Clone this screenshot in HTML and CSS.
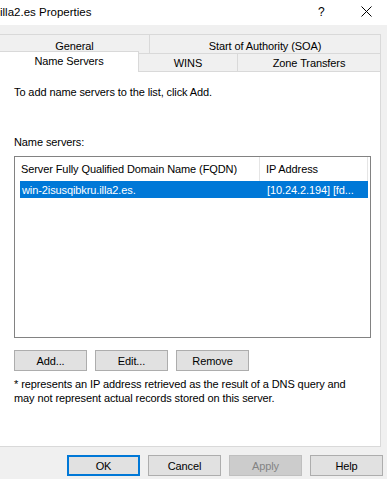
FILE: index.html
```html
<!DOCTYPE html>
<html lang="en">
<head>
    <meta charset="UTF-8">
    <title>illa2.es Properties</title>
    <link rel="stylesheet" href="styles.css">
</head>

<body>
    <!--1. title bar-->
    <header class="titlebar">
        <span class="title">illa2.es Properties</span>
        <span class="help">?</span>
        <span class="close">
            <svg width="11" height="11" viewBox="0 0 11 11">
                <path d="M0.5 0.5 L10.5 10.5 M10.5 0.5 L0.5 10.5" stroke="#000" stroke-width="1" fill="none"/>
            </svg>
        </span>
    </header>

    <!--2. tabs-->
    <nav class="tabs">
        <div class="tabrow">
            <div class="tab first t-general">General</div>
            <div class="tab t-soa">Start of Authority (SOA)</div>
        </div>
        <div class="tabrow">
            <div class="tab first active t-ns">Name Servers</div>
            <div class="tab t-wins">WINS</div>
            <div class="tab t-zone">Zone Transfers</div>
        </div>
    </nav>

    <!--3. panel-->
    <section class="panel">
        <p class="intro">To add name servers to the list, click Add.</p>
        <p class="label">Name servers:</p>

        <div class="listbox">
            <div class="lhead">
                <div class="col c-fqdn">Server Fully Qualified Domain Name (FQDN)</div>
                <div class="col c-ip">IP Address</div>
            </div>
            <div class="lrow selected">
                <div class="cell c-fqdn">win-2isusqibkru.illa2.es.</div>
                <div class="cell c-ip">[10.24.2.194] [fd...</div>
            </div>
        </div>

        <div class="btns">
            <button class="btn">Add...</button>
            <button class="btn">Edit...</button>
            <button class="btn">Remove</button>
        </div>

        <p class="note">* represents an IP address retrieved as the result of a DNS query and may not represent actual records stored on this server.</p>
    </section>

    <!--4. dialog buttons-->
    <footer class="footer">
        <button class="btn default">OK</button>
        <button class="btn">Cancel</button>
        <button class="btn" disabled>Apply</button>
        <button class="btn">Help</button>
    </footer>
</body>
</html>
```

FILE: styles.css
```css
html,
body,
p {
    margin: 0;
    padding: 0;
}

body {
    width: 387px;
    height: 479px;
    overflow: hidden;
    background-color: #f0f0f0;
    font-family: "Liberation Sans", Arial, sans-serif;
    font-size: 11px;
    letter-spacing: -0.1px;
    color: #000;
}

/*1. title bar*/
.titlebar {
    display: flex;
    align-items: center;
    height: 25px;
    background-color: #fff;
}

.title {
    flex: 1;
    font-size: 11.5px;
    letter-spacing: 0;
    padding-bottom: 2px;
}

.help {
    width: 12px;
    margin-right: 31px;
    font-size: 12px;
    padding-bottom: 2px;
}

.close {
    display: flex;
    width: 11px;
    margin-right: 15px;
    padding-bottom: 3px;
}

/*2. tabs*/
.tabs {
    padding-top: 9px;
}

.tabrow {
    display: flex;
    align-items: flex-end;
}

.tabrow:first-child {
    height: 19px;
}

.tabrow:last-child {
    height: 18px;
}

.tab {
    box-sizing: border-box;
    height: 100%;
    display: flex;
    align-items: center;
    justify-content: center;
    border: 1px solid #d9d9d9;
    border-bottom: none;
    border-left: none;
    padding-top: 1px;
}

.tabrow:first-child .tab {
    padding-top: 3px;
}

.t-general { width: 150px; }
.t-soa { width: 231px; }
.t-ns { width: 139px; }
.t-wins { width: 99px; }
.t-zone { width: 143px; }

.tab.active {
    position: relative;
    z-index: 1;
    height: 21px;
    margin-top: -2px;
    margin-bottom: -1px;
    background-color: #fff;
    padding-top: 0;
    padding-bottom: 2px;
    border-right: 1px solid #d9d9d9;
}

/*3. panel*/
.panel {
    box-sizing: border-box;
    width: 382px;
    height: 376px;
    margin-left: -1px;
    padding: 0 0 0 14px;
    background-color: #fff;
    border: 1px solid #d9d9d9;
}

.intro {
    margin-top: 13px;
    line-height: 15px;
}

.label {
    margin-top: 35px;
    line-height: 15px;
}

.listbox {
    box-sizing: border-box;
    width: 357px;
    height: 182px;
    margin-top: 6px;
    border: 1px solid #828282;
}

.lhead {
    display: flex;
    height: 24px;
}

.col {
    box-sizing: border-box;
    display: flex;
    align-items: center;
    padding-left: 6px;
    border-right: 1px solid #e5e5e5;
}

.lhead .c-fqdn { width: 245px; }
.lhead .c-ip { width: 108px; }

.lrow {
    display: flex;
    align-items: center;
    height: 17px;
    margin-left: 5px;
    width: 348px;
}

.selected {
    background-color: #0078d7;
    color: #fff;
}

.lrow .c-fqdn {
    width: 240px;
    padding-left: 2px;
}

.lrow .c-ip {
    padding-left: 5px;
    white-space: nowrap;
}

/*buttons*/
.btns {
    display: flex;
    gap: 8px;
    margin-top: 12px;
}

.btn {
    box-sizing: border-box;
    width: 73px;
    height: 21px;
    padding: 0;
    font: inherit;
    letter-spacing: inherit;
    color: #000;
    background-color: #e1e1e1;
    border: 1px solid #adadad;
    border-radius: 0;
}

.btn.default {
    border: 2px solid #0078d7;
}

.btn:disabled {
    background-color: #cccccc;
    border-color: #bfbfbf;
    color: #838383;
}

.note {
    margin-top: 6px;
    line-height: 14px;
    width: 350px;
}

/*4. footer*/
.footer {
    display: flex;
    justify-content: flex-end;
    gap: 8px;
    padding: 8px 4px 0 0;
}
```
